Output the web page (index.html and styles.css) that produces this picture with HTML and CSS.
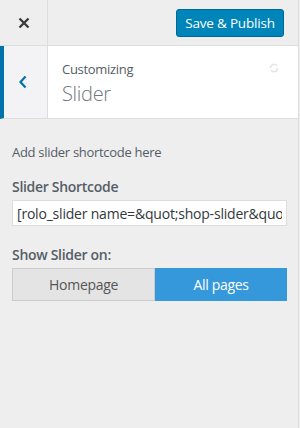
FILE: index.html
```html
<!DOCTYPE html>
<html>
    <head>
        <meta charset="utf-8">
        <title>Customizer - Slider</title>
        <link rel="stylesheet" href="styles.css">
    </head>
    <body>
        <div class="panel">
            <header class="topbar">
                <button type="button" class="close" aria-label="Close">
                    <svg width="14" height="14" viewBox="0 0 14 14">
                        <path d="M2.5 2.5 L11.5 11.5 M11.5 2.5 L2.5 11.5" stroke="#3c3c3c" stroke-width="2.4" fill="none"/>
                    </svg>
                </button>
                <button type="button" class="publish">Save &amp; Publish</button>
            </header>
            <div class="section-head">
                <button type="button" class="back" aria-label="Back">
                    <svg width="10" height="14" viewBox="0 0 10 14">
                        <path d="M7.5 1.5 L2.5 7 L7.5 12.5" stroke="#0073aa" stroke-width="2.2" fill="none"/>
                    </svg>
                </button>
                <div class="titles">
                    <span class="crumb">Customizing</span>
                    <h2 class="title">Slider</h2>
                </div>
                <svg class="refresh" width="12" height="12" viewBox="0 0 12 12">
                    <path d="M2.5 6 A3.5 3.5 0 0 1 9 4 M9.5 6 A3.5 3.5 0 0 1 3 8" stroke="#e6e6e6" stroke-width="1.5" fill="none"/>
                </svg>
            </div>
            <div class="controls">
                <p class="note">Add slider shortcode here</p>
                <label class="label" for="shortcode">Slider Shortcode</label>
                <input type="text" id="shortcode" value="[rolo_slider name=&amp;quot;shop-slider&amp;quot;]">
                <span class="label label-gap">Show Slider on:</span>
                <div class="toggle">
                    <button type="button" class="opt">Homepage</button>
                    <button type="button" class="opt active">All pages</button>
                </div>
            </div>
        </div>
    </body>
</html>
```
FILE: styles.css
```css
html {
    font-family: "Open Sans", "Noto Sans", sans-serif;
    font-size: 13px;
    letter-spacing: -0.3px;
}

* {
    box-sizing: border-box;
}

body {
    margin: 0;
    background: #eeeeee;
    color: #555d66;
}

.panel {
    width: 299px;
    height: 428px;
    border-right: 1px solid #dddddd;
}

.topbar {
    height: 46px;
    display: flex;
    align-items: center;
    justify-content: space-between;
    border-bottom: 1px solid #dddddd;
}

.close {
    width: 48px;
    height: 45px;
    border: 0;
    border-right: 1px solid #dddddd;
    background: #eeeeee;
    display: flex;
    align-items: center;
    justify-content: center;
    padding: 0;
}

.publish {
    margin-right: 14px;
    width: 108px;
    height: 28px;
    background: #0085ba;
    border: 1px solid #006799;
    border-radius: 3px;
    color: #ffffff;
    font-family: inherit;
    font-size: 13.5px;
    letter-spacing: -0.2px;
    padding: 0;
}

.section-head {
    height: 73px;
    display: flex;
    background: #ffffff;
    border-left: 4px solid #0073aa;
    border-bottom: 1px solid #dddddd;
    position: relative;
}

.back {
    width: 44px;
    border: 0;
    border-right: 1px solid #dddddd;
    background: #f3f3f5;
    display: flex;
    align-items: center;
    justify-content: center;
    padding: 0 6px 0 0;
}

.titles {
    padding: 13px 0 0 14px;
}

.crumb {
    display: block;
    font-size: 13px;
    line-height: 20px;
}

.title {
    margin: 0;
    font-size: 20px;
    font-weight: 300;
    line-height: 30px;
    color: #72777c;
}

.refresh {
    position: absolute;
    top: 16px;
    right: 18px;
}

.controls {
    padding: 12px 12px;
    display: flex;
    flex-direction: column;
}

.note {
    margin: 12px 0 0;
    line-height: 18px;
}

.label {
    font-size: 14px;
    font-weight: 600;
    line-height: 20px;
    margin-top: 16px;
}

.label-gap {
    margin-top: 19px;
}

input[type="text"] {
    margin-top: 3px;
    height: 26px;
    width: 275px;
    border: 1px solid #dddddd;
    background: #ffffff;
    color: #32373c;
    font-family: inherit;
    font-size: 14px;
    letter-spacing: -0.2px;
    padding: 0 4px;
}

.toggle {
    margin-top: 3px;
    display: flex;
    width: 275px;
}

.opt {
    flex: 1 1 0;
    height: 33px;
    font-family: inherit;
    font-size: 14px;
    letter-spacing: -0.3px;
    padding: 0;
    border: 1px solid #cccccc;
    background: #e4e4e4;
    color: #555555;
}

.opt.active {
    background: #3498db;
    border-color: #3498db;
    color: #ffffff;
    flex-basis: 0;
    flex-grow: 0.92;
}
```
